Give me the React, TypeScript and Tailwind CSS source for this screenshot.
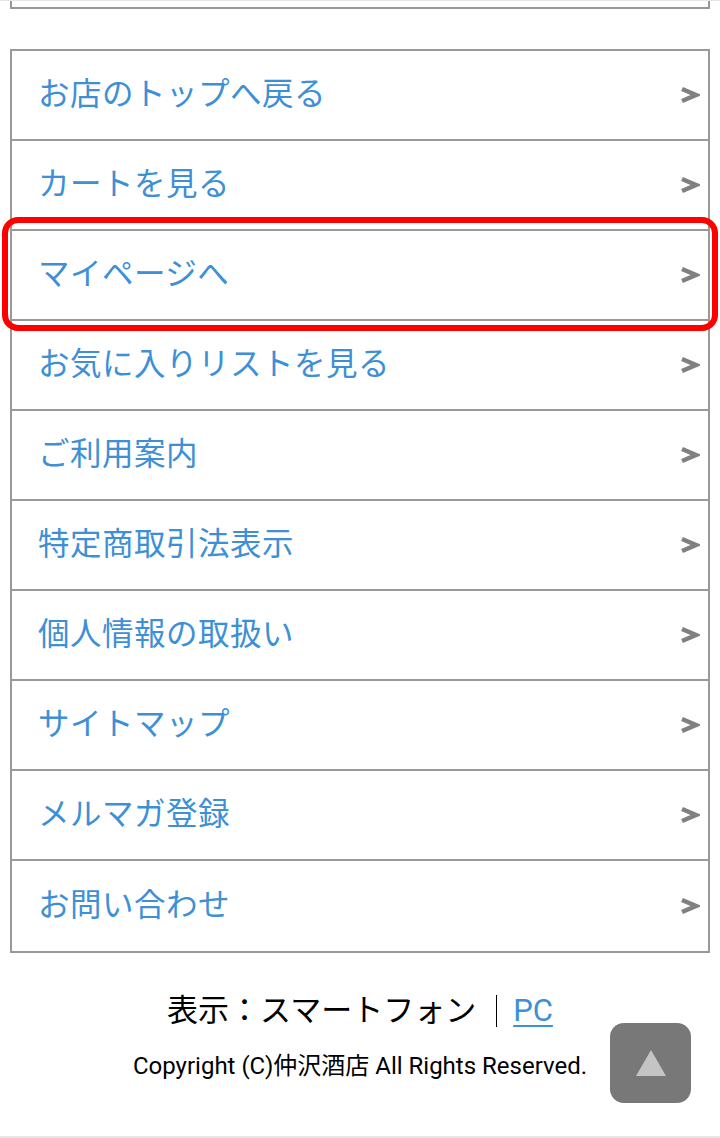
import React from "react"

const menuItems = [
  "お店のトップへ戻る",
  "カートを見る",
  "マイページへ",
  "お気に入りリストを見る",
  "ご利用案内",
  "特定商取引法表示",
  "個人情報の取扱い",
  "サイトマップ",
  "メルマガ登録",
  "お問い合わせ",
]

const fontStack = { fontFamily: 'Roboto, "Noto Sans CJK JP", sans-serif' }

function Chevron() {
  return (
    <svg width="20" height="18" viewBox="0 0 20 18" className="shrink-0">
      <polyline
        points="2,3 16,9 2,15"
        fill="none"
        stroke="#808080"
        strokeWidth="4.5"
        strokeLinejoin="miter"
      />
    </svg>
  )
}

export default function App() {
  return (
    <div className="relative min-h-[1138px] bg-white flex flex-col" style={fontStack}>
      {/* top edge of the previous block */}
      <div className="h-px bg-[#e6e6e6]" />
      <div className="mx-[10px] h-[8px] border-x-2 border-b-2 border-[#999]" />

      {/* Menu list */}
      <ul className="mx-[10px] mt-[40px] border-2 border-[#999]">
        {menuItems.map((item, i) => (
          <li
            key={item}
            className={`relative flex h-[90px] items-center justify-between pl-[26px] pr-[8px] ${
              i < menuItems.length - 1 ? "border-b-2 border-[#999]" : "h-[88px]"
            }`}
          >
            <span className="text-[31.5px] leading-none text-[#3d8fd6] tracking-[0.5px]">{item}</span>
            <Chevron />
            {i === 2 && (
              <div className="pointer-events-none absolute -left-[10px] -right-[10px] -top-[14px] -bottom-[12px] rounded-[16px] border-[6px] border-[#ff0000]" />
            )}
          </li>
        ))}
      </ul>

      {/* Footer */}
      <div className="mt-[38px] flex items-center justify-center text-[31px] leading-[40px] text-black">
        <span>表示：スマートフォン</span>
        <span className="ml-[20px] mr-[16px] inline-block h-[32px] w-px bg-black" />
        <a href="#" className="text-[#3d8fd6] underline underline-offset-[4px] decoration-[2px]">
          PC
        </a>
      </div>
      <p className="mt-[20px] text-center text-[24px] leading-[30px] text-black">
        Copyright (C)仲沢酒店 All Rights Reserved.
      </p>
      <div className="flex-1" />
      <div className="h-[2px] bg-[#e6e6e6]" />

      {/* Back to top button */}
      <button className="absolute left-[610px] top-[1023px] flex h-[80px] w-[81px] items-center justify-center rounded-[14px] bg-[#787878]">
        <svg width="30" height="26" viewBox="0 0 30 26">
          <polygon points="15,0 30,26 0,26" fill="#c4c4c4" />
        </svg>
      </button>
    </div>
  )
}
